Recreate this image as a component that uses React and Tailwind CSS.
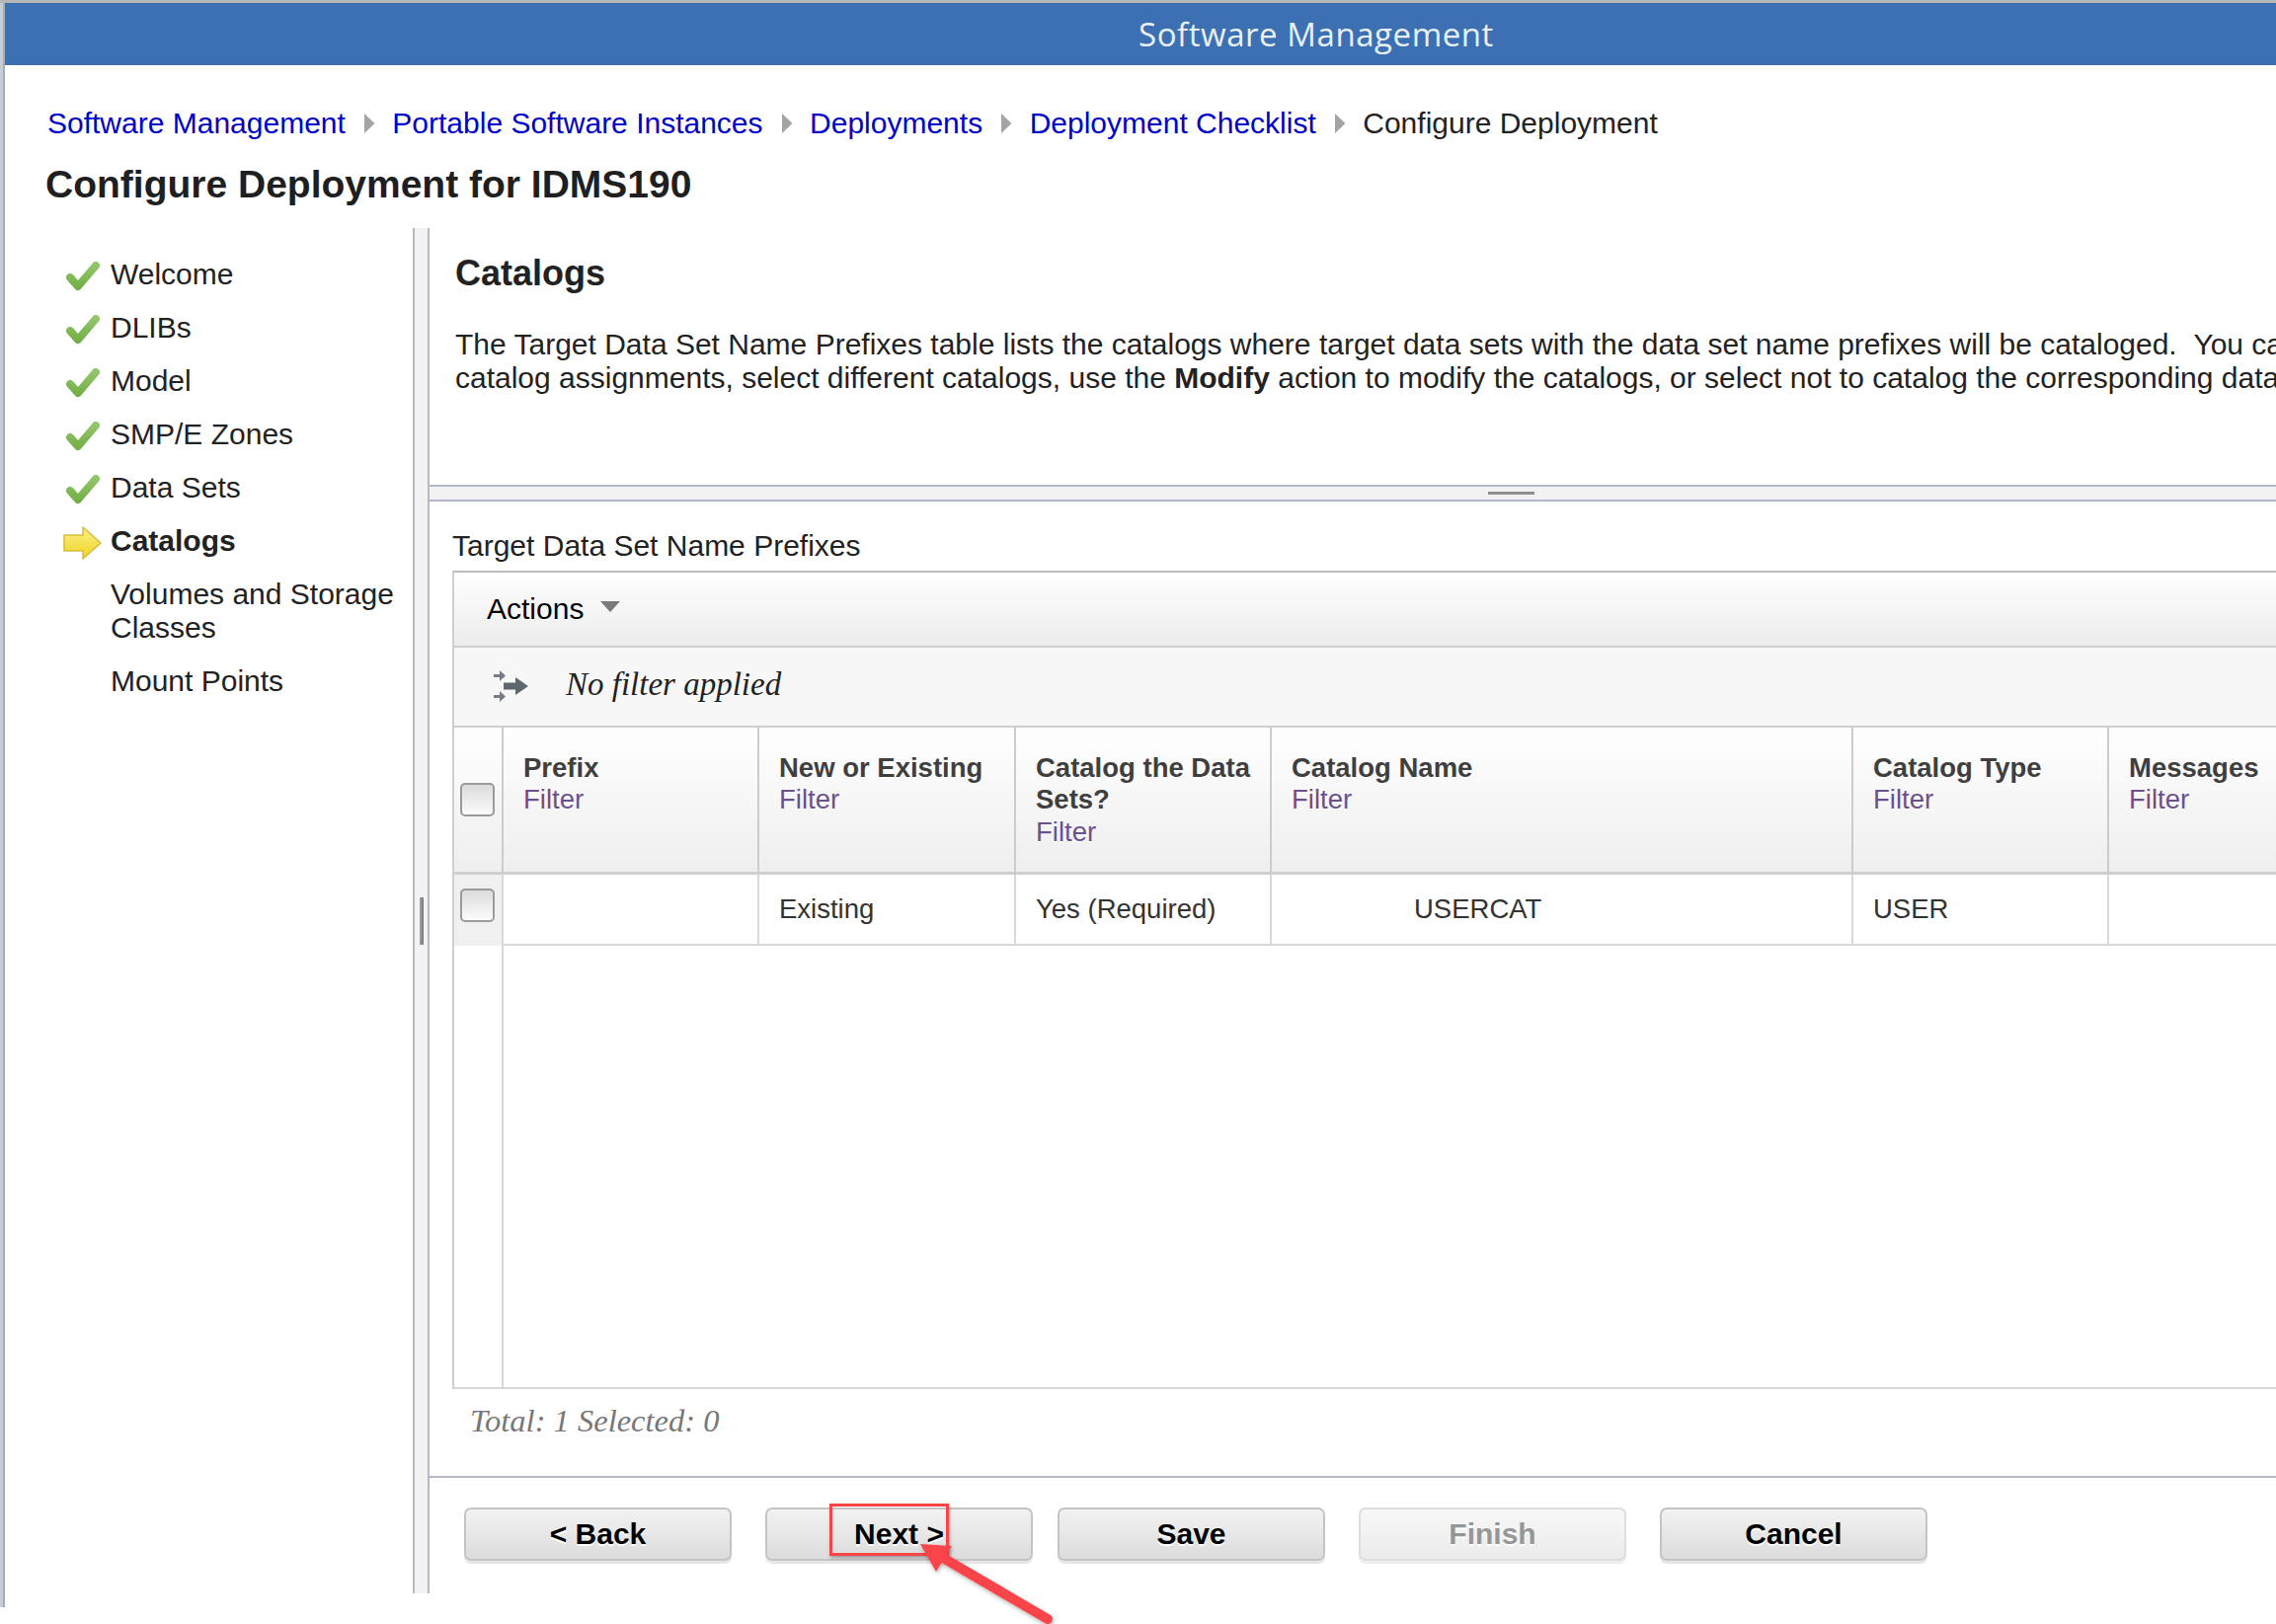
const sans = "[font-family:'Liberation_Sans',Arial,sans-serif]";

function Check() {
  return (
    <svg width="36" height="30" viewBox="0 0 36 30" className="block">
      <defs>
        <linearGradient id="chk" x1="0" y1="0" x2="0" y2="1">
          <stop offset="0" stopColor="#93c56c" />
          <stop offset="1" stopColor="#74b047" />
        </linearGradient>
      </defs>
      <path d="M5 16 L13 25 L31 4" fill="none" stroke="url(#chk)" strokeWidth="8" strokeLinecap="round" strokeLinejoin="round" />
    </svg>
  );
}

function YellowArrow() {
  return (
    <svg width="40" height="34" viewBox="0 0 40 34" className="block">
      <defs>
        <linearGradient id="yel" x1="0" y1="0" x2="0" y2="1">
          <stop offset="0" stopColor="#fbf08a" />
          <stop offset="1" stopColor="#efd320" />
        </linearGradient>
      </defs>
      <path d="M2 9 L21 9 L21 1 L39 17 L21 33 L21 25 L2 25 Z" fill="url(#yel)" stroke="#d8bd3c" strokeWidth="1.6" strokeLinejoin="round" />
    </svg>
  );
}

function FilterIcon() {
  return (
    <svg width="38" height="36" viewBox="0 0 38 36" className="block">
      <g fill="#5e6670">
        <path d="M2 7 H8 V3 L14 8.5 L8 14 V10 H2 Z" opacity="0.85" />
        <path d="M2 28 H8 V24 L14 29.5 L8 35 V31 H2 Z" opacity="0.85" />
        <path d="M12 15.5 H24 V10 L37 19 L24 28 V22.5 H12 Z" />
      </g>
    </svg>
  );
}

function Crumb({ children, link }) {
  return link ? (
    <span className="text-[#0000cc]">{children}</span>
  ) : (
    <span className="text-[#222222]">{children}</span>
  );
}

function CrumbSep() {
  return (
    <svg width="12" height="20" viewBox="0 0 12 20" className="mr-[17.5px] ml-[18px] block">
      <path d="M1 0 L11.5 10 L1 20 Z" fill="#a4a4a4" />
    </svg>
  );
}

function CheckBox() {
  return (
    <div className="h-[34px] w-[35px] rounded-[5px] border-2 border-[#9b9b9b] bg-gradient-to-b from-[#dcdcdc] to-[#fbfbfb]" />
  );
}

function Btn({ children, disabled, className = "" }) {
  return disabled ? (
    <div className={`flex h-[54px] w-[271px] items-center justify-center rounded-[7px] border-2 border-[#dedede] bg-gradient-to-b from-[#f8f8f8] to-[#ebebeb] pb-[2px] text-[30px] font-bold text-[#969696] shadow-[0_3px_0_#eeeeee] [text-shadow:0_2px_0_#ffffff] ${className}`}>
      {children}
    </div>
  ) : (
    <div className={`flex h-[54px] w-[271px] items-center justify-center rounded-[7px] border-2 border-[#c4c4c4] bg-gradient-to-b from-[#f2f2f2] to-[#dcdcdc] pb-[2px] text-[30px] font-bold text-black shadow-[0_3px_0_#e6e6e6] [text-shadow:0_2px_0_#ffffff] ${className}`}>
      {children}
    </div>
  );
}

function HeadCell({ title, second }) {
  return (
    <div className="border-r-2 border-b-[3px] border-r-[#cccccc] border-b-[#cfcfcf] px-[20px] pt-[25px] leading-[32.4px] text-[#3f3f3f] [text-shadow:0_1px_0_#ffffff]">
      <div className="font-bold">{title}</div>
      {second && <div className="font-bold">{second}</div>}
      <div className="text-[#6c4f8c]">Filter</div>
    </div>
  );
}

function RowCell({ children, indent }) {
  return (
    <div className={`flex items-center border-r-2 border-b-2 border-[#d9d9d9] text-[#333333] ${indent ? "pl-[144px]" : "pl-[20px]"}`}>
      {children}
    </div>
  );
}

export default function App() {
  const steps = ["Welcome", "DLIBs", "Model", "SMP/E Zones", "Data Sets"];
  return (
    <div className={`${sans} relative flex h-[1645px] w-[2305px] items-start overflow-hidden border-t-[3px] border-t-[#b4b6b8] bg-white text-[30px] text-[#222222]`}>
      <div className="h-[1625px] w-[5px] shrink-0 border-r-2 border-[#a9acb2] bg-[#c6cdd4]" />

      <div className="w-[2620px] shrink-0">
        <div className="flex h-[63px] items-center justify-center bg-[#3d70b2] pl-[36px] text-[33px] leading-none tracking-[0.55px] text-[#e8f0fa] [font-family:'Open_Sans',sans-serif]">
          Software Management
        </div>

        <div className="mt-[42px] flex h-[34px] items-center pl-[43px] leading-[34px] whitespace-nowrap">
          <Crumb link>Software Management</Crumb>
          <CrumbSep />
          <Crumb link>Portable Software Instances</Crumb>
          <CrumbSep />
          <Crumb link>Deployments</Crumb>
          <CrumbSep />
          <Crumb link>Deployment Checklist</Crumb>
          <CrumbSep />
          <Crumb>Configure Deployment</Crumb>
        </div>

        <h1 className="mt-[22px] pl-[41px] text-[39px] leading-[46px] font-bold text-[#1f1f1f]">
          Configure Deployment for IDMS190
        </h1>

        <div className="mt-[21px] flex h-[1383px]">
          <nav className="flex w-[413px] shrink-0 flex-col gap-[20px] pt-[30px] pl-[58px] leading-[34px]">
            {steps.map((s) => (
              <div key={s} className="flex h-[34px] items-start">
                <div className="mt-[4px] w-[49px] shrink-0 pl-[3px]">
                  <Check />
                </div>
                <span>{s}</span>
              </div>
            ))}
            <div className="flex h-[34px] items-start">
              <div className="mt-[2px] w-[49px] shrink-0">
                <YellowArrow />
              </div>
              <span className="font-bold">Catalogs</span>
            </div>
            <div className="flex items-start pl-[49px]">
              <span>Volumes and Storage Classes</span>
            </div>
            <div className="flex items-start pl-[49px]">
              <span>Mount Points</span>
            </div>
          </nav>

          <div className="flex w-[17px] shrink-0 items-center justify-center border-x-2 border-[#b4b9c9] bg-[#f2f2f2]">
            <div className="mt-[20px] h-[48px] w-[4px] bg-gradient-to-r from-[#a5a5a5] to-[#777777]" />
          </div>

          <main className="flex min-w-0 flex-1 flex-col">
            <section className="h-[260px] shrink-0 pt-[25px] pl-[26px]">
              <h2 className="text-[36px] leading-[42px] font-bold text-[#222222]">Catalogs</h2>
              <div className="mt-[34px] leading-[34px] whitespace-nowrap">
                <p>The Target Data Set Name Prefixes table lists the catalogs where target data sets with the data set name prefixes will be cataloged.{"\u00a0\u00a0"}You can accept the default</p>
                <p>
                  catalog assignments, select different catalogs, use the <b>Modify</b> action to modify the catalogs, or select not to catalog the corresponding data sets.
                </p>
              </div>
            </section>

            <div className="flex h-[17px] shrink-0 items-center justify-center border-y-2 border-[#b4b9c9] bg-[#f2f2f2]">
              <div className="h-[3px] w-[47px] bg-[#8f8f8f]" />
            </div>

            <section className="flex h-[987px] shrink-0 flex-col pt-[28px] pl-[23px]">
              <div className="leading-[34px]">Target Data Set Name Prefixes</div>

              <div className="mt-[8px] flex h-[829px] flex-col border-t-2 border-l-2 border-t-[#bdbdbd] border-l-[#cfcfcf] text-[27.5px]">
                <div className="flex h-[76px] shrink-0 items-center gap-[17px] border-b-2 border-[#cfcfcf] bg-gradient-to-b from-white to-[#ececec] pb-[1px] pl-[33px] text-[30px] text-black [text-shadow:0_1px_0_#ffffff]">
                  <span>Actions</span>
                  <svg width="20" height="11" viewBox="0 0 20 11" className="mb-[4px] block">
                    <path d="M0 0 H20 L10 11 Z" fill="#7a7a7a" />
                  </svg>
                </div>

                <div className="flex h-[81px] shrink-0 items-center border-b-2 border-[#cfcfcf] bg-[#f7f7f7] pb-[4px] pl-[38px] text-[33px] text-[#222222] italic [font-family:'Liberation_Serif',serif]">
                  <FilterIcon />
                  <span className="ml-[37px]">No filter applied</span>
                </div>

                <div className="grid h-[149px] shrink-0 grid-cols-[50px_259px_260px_259px_589px_259px_1fr] bg-gradient-to-b from-white to-[#eeeeee]">
                  <div className="flex items-center justify-center border-r-2 border-b-[3px] border-r-[#cccccc] border-b-[#cfcfcf] pr-[2px]">
                    <CheckBox />
                  </div>
                  <HeadCell title="Prefix" />
                  <HeadCell title="New or Existing" />
                  <HeadCell title="Catalog the Data" second="Sets?" />
                  <HeadCell title="Catalog Name" />
                  <HeadCell title="Catalog Type" />
                  <div className="border-b-[3px] border-[#cfcfcf] pt-[25px] pl-[20px] leading-[32.4px] text-[#3f3f3f] [text-shadow:0_1px_0_#ffffff]">
                    <div className="font-bold">Messages</div>
                    <div className="text-[#6c4f8c]">Filter</div>
                  </div>
                </div>

                <div className="grid h-[72px] shrink-0 grid-cols-[50px_259px_260px_259px_589px_259px_1fr]">
                  <div className="flex justify-center border-r-2 border-r-[#d9d9d9] bg-[#f0f0f0] pt-[14px] pr-[2px]">
                    <CheckBox />
                  </div>
                  <RowCell />
                  <RowCell>Existing</RowCell>
                  <RowCell>Yes (Required)</RowCell>
                  <RowCell indent>USERCAT</RowCell>
                  <RowCell>USER</RowCell>
                  <div className="border-b-2 border-[#d9d9d9]" />
                </div>

                <div className="flex flex-1 border-b-2 border-[#d6d8dc]">
                  <div className="w-[50px] border-r-2 border-[#d9d9d9]" />
                </div>
              </div>

              <div className="mt-[12px] pl-[18px] text-[32.5px] leading-[40px] text-[#777777] italic [font-family:'Liberation_Serif',serif]">
                Total: 1 Selected: 0
              </div>
            </section>

            <footer className="flex flex-1 gap-[34px] border-t-2 border-[#b4b9c9] pt-[30px] pl-[35px]">
              <Btn>&lt; Back</Btn>
              <Btn>Next &gt;</Btn>
              <Btn className="-ml-[9px]">Save</Btn>
              <Btn disabled>Finish</Btn>
              <Btn>Cancel</Btn>
            </footer>
          </main>
        </div>
      </div>

      <div className="absolute top-[1520px] left-[840px] h-[53px] w-[121px] border-[3px] border-[#f94548] shadow-[1px_2px_3px_rgba(0,0,0,0.3)]" />
      <svg width="150" height="90" viewBox="0 0 150 90" className="absolute top-[1552px] left-[925px] overflow-visible">
        <defs>
          <filter id="sh" x="-20%" y="-20%" width="140%" height="140%">
            <feDropShadow dx="1" dy="2" stdDeviation="2" floodOpacity="0.3" />
          </filter>
        </defs>
        <g filter="url(#sh)">
          <path d="M30 23 L136 85" stroke="#f94548" strokeWidth="10" strokeLinecap="round" />
          <path d="M7 9 L39 11 L23 37 Z" fill="#f94548" />
        </g>
      </svg>
    </div>
  );
}
